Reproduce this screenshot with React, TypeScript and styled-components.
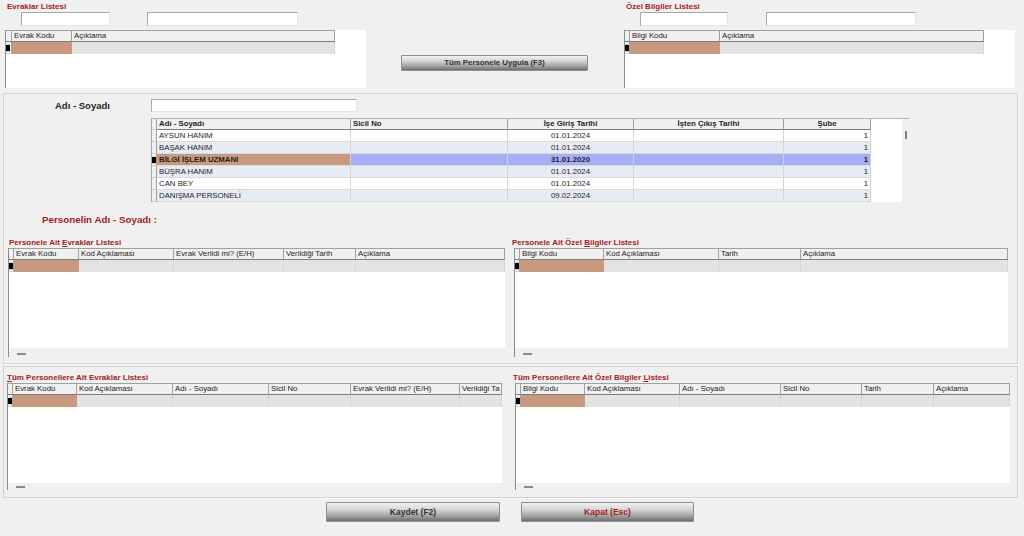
import React from "react";
import styled, { createGlobalStyle } from "styled-components";

const GlobalStyle = createGlobalStyle`
  * { box-sizing: border-box; }
  body {
    margin: 0;
    background: #f0f0f0;
    font-family: "Liberation Sans", Arial, sans-serif;
    color: #1c1c1c;
  }
`;

const Screen = styled.div`
  width: 1024px;
  height: 536px;
  overflow: hidden;
  background: #f0f0f0;
  display: flex;
  flex-direction: column;
`;

/* ---------- top strip ---------- */

const TopRow = styled.div`
  display: flex;
  height: 93px;
  padding: 1px 0 0 5px;
`;

const TopBlock = styled.div<{ $w: number }>`
  width: ${(p) => p.$w}px;
  display: flex;
  flex-direction: column;
`;

const ButtonSlot = styled.div`
  width: 258px;
  padding: 50px 0 0 35px;
`;

const ListTitle = styled.div<{ $indent?: number }>`
  color: #a31b1b;
  font-weight: bold;
  font-size: 8px;
  line-height: 11px;
  height: 11px;
  padding-left: ${(p) => p.$indent ?? 0}px;
  white-space: nowrap;

  u {
    text-decoration-thickness: 1px;
  }
`;

const InputRow = styled.div<{ $indent: number; $gap: number }>`
  display: flex;
  gap: ${(p) => p.$gap}px;
  padding-left: ${(p) => p.$indent}px;
  margin-bottom: 4px;
`;

const TextBox = styled.div<{ $w: number; $h?: number }>`
  width: ${(p) => p.$w}px;
  height: ${(p) => p.$h ?? 14}px;
  background: #fff;
  border: 1px solid;
  border-color: #a8a8a8 #e4e4e4 #e4e4e4 #a8a8a8;
`;

const ActionButton = styled.button<{ $w: number; $h: number; $danger?: boolean; $size: number }>`
  width: ${(p) => p.$w}px;
  height: ${(p) => p.$h}px;
  padding: 0;
  border: 1px solid #8e8e8e;
  border-radius: 1px;
  background: linear-gradient(#f2f2f2 0%, #d6d6d6 35%, #a6a6a6 70%, #6e6e6e 100%);
  color: ${(p) => (p.$danger ? "#a31d1d" : "#3a2e2e")};
  font-family: "Liberation Sans", Arial, sans-serif;
  font-weight: bold;
  font-size: ${(p) => p.$size}px;
  line-height: 1;
`;

/* ---------- generic grid ---------- */

type Col = { label: string; w: number };

const GridFrame = styled.div<{ $w: number; $h: number }>`
  width: ${(p) => p.$w}px;
  height: ${(p) => p.$h}px;
  background: #fff;
  border-left: 1px solid #8c8c8c;
  display: flex;
  flex-direction: column;
`;

const GridHead = styled.div`
  display: flex;
  height: 12px;
  flex: none;
`;

const HeadCell = styled.div<{ $w: number }>`
  width: ${(p) => p.$w}px;
  height: 12px;
  flex: none;
  background: #f0f0f0;
  border-top: 1px solid #a0a0a0;
  border-bottom: 1px solid #7c7c7c;
  border-right: 1px solid #a0a0a0;
  padding: 0 2px;
  font-size: 7.8px;
  line-height: 10px;
  white-space: nowrap;
  overflow: hidden;
  color: #222;
`;

const GridRow = styled.div`
  display: flex;
  height: 12px;
  flex: none;
`;

const IndicatorCell = styled.div<{ $w: number }>`
  width: ${(p) => p.$w}px;
  height: 100%;
  flex: none;
  background: #f0f0f0;
  border-right: 1px solid #a0a0a0;
  border-bottom: 1px solid #d0d0d0;
  display: flex;
  align-items: center;
`;

const RowMarker = styled.span`
  display: block;
  width: 4px;
  height: 6px;
  background: #000;
  box-shadow: 0 -2px 0 -1px #bdbdbd, 0 2px 0 -1px #bdbdbd;
`;

const NewCell = styled.div<{ $w: number; $first: boolean }>`
  width: ${(p) => p.$w}px;
  height: 12px;
  flex: none;
  background: ${(p) => (p.$first ? "#c8997f" : "#e3e3e3")};
  border-right: 1px solid ${(p) => (p.$first ? "#c8997f" : "#d6d6d6")};
`;

const GridBody = styled.div`
  flex: 1;
  background: #fff;
`;

const GridStrip = styled.div<{ $h: number }>`
  height: ${(p) => p.$h}px;
  flex: none;
  background: #f0f0f0;
  display: flex;
  align-items: flex-end;
  padding: 0 0 2px 8px;
`;

const StripDash = styled.span`
  width: 9px;
  height: 2px;
  background: #8a8a8a;
`;

type GridProps = {
  cols: Col[];
  width: number;
  height: number;
  ind?: number;
  strip?: number;
};

const DataGrid = ({ cols, width, height, ind = 5, strip }: GridProps) => (
  <GridFrame $w={width} $h={height}>
    <GridHead>
      <HeadCell $w={ind} />
      {cols.map((c) => (
        <HeadCell key={c.label} $w={c.w}>
          {c.label}
        </HeadCell>
      ))}
    </GridHead>
    <GridRow>
      <IndicatorCell $w={ind}>
        <RowMarker />
      </IndicatorCell>
      {cols.map((c, i) => (
        <NewCell key={c.label} $w={c.w} $first={i === 0} />
      ))}
    </GridRow>
    <GridBody />
    {strip ? (
      <GridStrip $h={strip}>
        <StripDash />
      </GridStrip>
    ) : null}
  </GridFrame>
);

/* ---------- panels ---------- */

const Panel = styled.div<{ $top: number }>`
  width: 1015px;
  margin: ${(p) => p.$top}px 0 0 3px;
  border: 1px solid #d2d2d2;
  box-shadow: 1px 1px 0 #fafafa;
  display: flex;
  flex-direction: column;
`;

const SearchRow = styled.div`
  display: flex;
  align-items: center;
  padding-top: 5px;
`;

const SearchLabel = styled.div`
  width: 147px;
  padding-left: 51px;
  font-weight: bold;
  font-size: 9.5px;
  color: #262626;
`;

/* ---------- personnel table ---------- */

const TableWrap = styled.div`
  display: flex;
  width: 758px;
  height: 84px;
  margin: 6px 0 0 147px;
  border-top: 1px solid #b4b4b4;
`;

const TableArea = styled.div`
  width: 751px;
  background: #fff;
  border-left: 1px solid #a8a8a8;
`;

const ScrollColumn = styled.div`
  flex: 1;
  padding: 12px 0 0 3px;
`;

const ScrollThumb = styled.div`
  width: 2px;
  height: 8px;
  background: #7c7c7c;
`;

const TRow = styled.div`
  display: flex;
  height: 12px;
`;

const THead = styled.div`
  display: flex;
  height: 11px;
`;

const TCell = styled.div<{ $w: number; $align: string; $bold?: boolean; $bg: string; $head?: boolean }>`
  width: ${(p) => p.$w}px;
  flex: none;
  padding: 0 2px;
  text-align: ${(p) => p.$align};
  font-size: 7.8px;
  line-height: ${(p) => (p.$head ? 10 : 11)}px;
  font-weight: ${(p) => (p.$bold ? "bold" : "normal")};
  white-space: nowrap;
  overflow: hidden;
  background: ${(p) => p.$bg};
  border-right: 1px solid ${(p) => (p.$head ? "#a0a0a0" : "#d4d4d4")};
  border-bottom: 1px solid ${(p) => (p.$head ? "#7c7c7c" : "#dadada")};
  color: #1e1e1e;
`;

const TIndicator = styled.div`
  width: 5px;
  flex: none;
  background: #f0f0f0;
  border-right: 1px solid #a0a0a0;
  border-bottom: 1px solid #d0d0d0;
  display: flex;
  align-items: center;
`;

const tableCols = [
  { label: "Adı - Soyadı", w: 194, align: "left" },
  { label: "Sicil No", w: 157, align: "left" },
  { label: "İşe Giriş Tarihi", w: 126, align: "center" },
  { label: "İşten Çıkış Tarihi", w: 150, align: "center" },
  { label: "Şube", w: 87, align: "center" },
];

const people = [
  ["AYSUN HANIM", "", "01.01.2024", "", "1"],
  ["BAŞAK HANIM", "", "01.01.2024", "", "1"],
  ["BİLGİ İŞLEM UZMANI", "", "31.01.2020", "", "1"],
  ["BÜŞRA HANIM", "", "01.01.2024", "", "1"],
  ["CAN BEY", "", "01.01.2024", "", "1"],
  ["DANIŞMA PERSONELİ", "", "09.02.2024", "", "1"],
];

const bodyAlign = ["left", "left", "center", "center", "right"];

const cellColour = (row: number, col: number) => {
  if (row === 2) return col === 0 ? "#c8997f" : "#a7aef6";
  return row % 2 === 1 ? "#e6ebf6" : "#ffffff";
};

const PersonnelTable = () => (
  <TableWrap>
    <TableArea>
      <THead>
        <TIndicator />
        {tableCols.map((c) => (
          <TCell key={c.label} $w={c.w} $align={c.align} $bold $head $bg="#f0f0f0">
            {c.label}
          </TCell>
        ))}
      </THead>
      {people.map((row, r) => (
        <TRow key={row[0]}>
          <TIndicator>{r === 2 && <RowMarker />}</TIndicator>
          {row.map((v, i) => (
            <TCell key={i} $w={tableCols[i].w} $align={bodyAlign[i]} $bold={r === 2} $bg={cellColour(r, i)}>
              {v}
            </TCell>
          ))}
        </TRow>
      ))}
    </TableArea>
    <ScrollColumn>
      <ScrollThumb />
    </ScrollColumn>
  </TableWrap>
);

/* ---------- lower sections ---------- */

const PersonLabel = styled.div`
  height: 14px;
  margin-top: 11px;
  padding-left: 38px;
  color: #a31b1b;
  font-weight: bold;
  font-size: 9.8px;
  line-height: 14px;
`;

const GridPair = styled.div<{ $top: number; $left: number; $gap: number; $bottom: number }>`
  display: flex;
  gap: ${(p) => p.$gap}px;
  margin-top: ${(p) => p.$top}px;
  padding: 0 0 ${(p) => p.$bottom}px ${(p) => p.$left}px;
`;

const GridBlock = styled.div<{ $shift?: number }>`
  display: flex;
  flex-direction: column;

  & > ${GridFrame} {
    margin-left: ${(p) => p.$shift ?? 0}px;
  }
`;

const ButtonRow = styled.div`
  display: flex;
  gap: 21px;
  margin: 4px 0 0 326px;
`;

const topLeftCols: Col[] = [
  { label: "Evrak Kodu", w: 60 },
  { label: "Açıklama", w: 263 },
];

const topRightCols: Col[] = [
  { label: "Bilgi Kodu", w: 90 },
  { label: "Açıklama", w: 264 },
];

const midLeftCols: Col[] = [
  { label: "Evrak Kodu", w: 65 },
  { label: "Kod Açıklaması", w: 95 },
  { label: "Evrak Verildi mi? (E/H)", w: 110 },
  { label: "Verildiği Tarih", w: 72 },
  { label: "Açıklama", w: 149 },
];

const midRightCols: Col[] = [
  { label: "Bilgi Kodu", w: 84 },
  { label: "Kod Açıklaması", w: 115 },
  { label: "Tarih", w: 82 },
  { label: "Açıklama", w: 207 },
];

const allLeftCols: Col[] = [
  { label: "Evrak Kodu", w: 64 },
  { label: "Kod Açıklaması", w: 96 },
  { label: "Adı - Soyadı", w: 96 },
  { label: "Sicil No", w: 82 },
  { label: "Evrak Verildi mi? (E/H)", w: 109 },
  { label: "Verildiği Ta", w: 42 },
];

const allRightCols: Col[] = [
  { label: "Bilgi Kodu", w: 64 },
  { label: "Kod Açıklaması", w: 95 },
  { label: "Adı - Soyadı", w: 101 },
  { label: "Sicil No", w: 81 },
  { label: "Tarih", w: 72 },
  { label: "Açıklama", w: 76 },
];

const App = () => (
  <Screen>
    <GlobalStyle />
    <TopRow>
      <TopBlock $w={361}>
        <ListTitle $indent={2}>Evraklar Listesi</ListTitle>
        <InputRow $indent={16} $gap={37}>
          <TextBox $w={89} />
          <TextBox $w={151} />
        </InputRow>
        <DataGrid cols={topLeftCols} width={361} height={58} ind={6} />
      </TopBlock>
      <ButtonSlot>
        <ActionButton $w={187} $h={16} $size={7.8}>
          Tüm Personele Uygula (F3)
        </ActionButton>
      </ButtonSlot>
      <TopBlock $w={391}>
        <ListTitle $indent={2}>Özel Bilgiler Listesi</ListTitle>
        <InputRow $indent={16} $gap={38}>
          <TextBox $w={88} />
          <TextBox $w={150} />
        </InputRow>
        <DataGrid cols={topRightCols} width={391} height={58} />
      </TopBlock>
    </TopRow>

    <Panel $top={0}>
      <SearchRow>
        <SearchLabel>Adı - Soyadı</SearchLabel>
        <TextBox $w={206} $h={13} />
      </SearchRow>
      <PersonnelTable />
      <PersonLabel>Personelin Adı - Soyadı :</PersonLabel>
      <GridPair $top={10} $left={4} $gap={7} $bottom={6}>
        <GridBlock>
          <ListTitle $indent={1}>
            Personele Ait <u>E</u>vraklar Listesi
          </ListTitle>
          <DataGrid cols={midLeftCols} width={497} height={109} strip={9} />
        </GridBlock>
        <GridBlock $shift={2}>
          <ListTitle>
            Personele Ait Özel <u>B</u>ilgiler Listesi
          </ListTitle>
          <DataGrid cols={midRightCols} width={494} height={109} strip={9} />
        </GridBlock>
      </GridPair>
    </Panel>

    <Panel $top={2}>
      <GridPair $top={5} $left={3} $gap={11} $bottom={7}>
        <GridBlock>
          <ListTitle>
            <u>T</u>üm Personellere Ait Evraklar Listesi
          </ListTitle>
          <DataGrid cols={allLeftCols} width={495} height={107} strip={7} />
        </GridBlock>
        <GridBlock $shift={2}>
          <ListTitle>
            Tüm Personellere Ait Özel Bilgiler <u>L</u>istesi
          </ListTitle>
          <DataGrid cols={allRightCols} width={495} height={107} strip={7} />
        </GridBlock>
      </GridPair>
    </Panel>

    <ButtonRow>
      <ActionButton $w={174} $h={20} $size={8.5}>
        Kaydet (F2)
      </ActionButton>
      <ActionButton $w={173} $h={20} $size={8.5} $danger>
        Kapat (Esc)
      </ActionButton>
    </ButtonRow>
  </Screen>
);

export default App;
